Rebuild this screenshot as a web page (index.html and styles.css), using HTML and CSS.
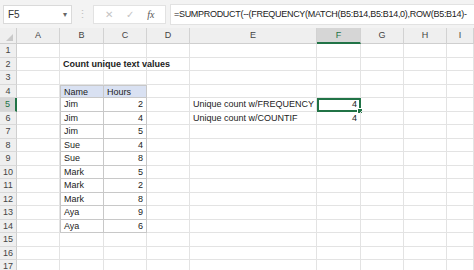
FILE: index.html
```html
<!DOCTYPE html>
<html>
  <head>
    <title>Count unique text values</title>
    <link rel="stylesheet" href="styles.css">
  </head>
  <body>
    <div class="bar">
      <div class="namebox">F5<span class="drop">&#9662;</span></div>
      <div class="dots">&#8942;</div>
      <div class="fxbox">
        <span class="ico">&#10005;</span>
        <span class="ico">&#10003;</span>
        <span class="fx">fx</span>
      </div>
      <div class="formula">=SUMPRODUCT(--(FREQUENCY(MATCH(B5:B14,B5:B14,0),ROW(B5:B14)-</div>
    </div>

    <div class="sheet">
      <div class="corner"><span class="tri"></span></div>
      <div class="ch">A</div><div class="ch">B</div><div class="ch">C</div><div class="ch">D</div>
      <div class="ch">E</div><div class="ch sel">F</div><div class="ch">G</div><div class="ch">H</div><div class="ch">I</div>

      <div class="rh">1</div><div></div><div></div><div></div><div></div><div></div><div></div><div></div><div></div><div></div>
      <div class="rh">2</div><div></div><div class="title">Count unique text values</div><div></div><div></div><div></div><div></div><div></div><div></div><div></div>
      <div class="rh">3</div><div></div><div></div><div></div><div></div><div></div><div></div><div></div><div></div><div></div>
      <div class="rh">4</div><div></div><div class="t th">Name</div><div class="t th">Hours</div><div></div><div></div><div></div><div></div><div></div><div></div>
      <div class="rh sel">5</div><div></div><div class="t">Jim</div><div class="t num">2</div><div></div><div class="lbl">Unique count w/FREQUENCY</div><div class="num active">4<span class="handle"></span></div><div></div><div></div><div></div>
      <div class="rh">6</div><div></div><div class="t">Jim</div><div class="t num">4</div><div></div><div class="lbl">Unique count w/COUNTIF</div><div class="num">4</div><div></div><div></div><div></div>
      <div class="rh">7</div><div></div><div class="t">Jim</div><div class="t num">5</div><div></div><div></div><div></div><div></div><div></div><div></div>
      <div class="rh">8</div><div></div><div class="t">Sue</div><div class="t num">4</div><div></div><div></div><div></div><div></div><div></div><div></div>
      <div class="rh">9</div><div></div><div class="t">Sue</div><div class="t num">8</div><div></div><div></div><div></div><div></div><div></div><div></div>
      <div class="rh">10</div><div></div><div class="t">Mark</div><div class="t num">5</div><div></div><div></div><div></div><div></div><div></div><div></div>
      <div class="rh">11</div><div></div><div class="t">Mark</div><div class="t num">2</div><div></div><div></div><div></div><div></div><div></div><div></div>
      <div class="rh">12</div><div></div><div class="t">Mark</div><div class="t num">8</div><div></div><div></div><div></div><div></div><div></div><div></div>
      <div class="rh">13</div><div></div><div class="t">Aya</div><div class="t num">9</div><div></div><div></div><div></div><div></div><div></div><div></div>
      <div class="rh">14</div><div></div><div class="t">Aya</div><div class="t num">6</div><div></div><div></div><div></div><div></div><div></div><div></div>
      <div class="rh">15</div><div></div><div></div><div></div><div></div><div></div><div></div><div></div><div></div><div></div>
      <div class="rh">16</div><div></div><div></div><div></div><div></div><div></div><div></div><div></div><div></div><div></div>
      <div class="rh">17</div><div></div><div></div><div></div><div></div><div></div><div></div><div></div><div></div><div></div>
    </div>
  </body>
</html>
```

FILE: styles.css
```css
body{
  margin: 0;
  width: 474px;
  height: 270px;
  overflow: hidden;
  background: white;
  font-family: "Liberation Sans", Arial, sans-serif;
  font-size: 9px;
  color: #222;
}

.bar{
  display: flex;
  align-items: center;
  height: 28px;
  padding: 0 0 0 3px;
  background: #f3f3f3;
  box-sizing: border-box;
}
.namebox{
  width: 69px;
  height: 19px;
  box-sizing: border-box;
  background: white;
  border: 1px solid #dadada;
  display: flex;
  align-items: center;
  justify-content: space-between;
  padding: 0 4px 0 4px;
  font-size: 10px;
  color: #333;
}
.drop{
  font-size: 8px;
  color: #666;
}
.dots{
  width: 21px;
  text-align: center;
  color: #c0c0c0;
  font-size: 11px;
}
.fxbox{
  width: 73px;
  height: 19px;
  box-sizing: border-box;
  background: white;
  border: 1px solid #e2e2e2;
  display: flex;
  align-items: center;
  justify-content: space-around;
  padding: 0 4px;
}
.ico{
  color: #c4c4c4;
  font-size: 10px;
}
.fx{
  font-family: "Liberation Serif", serif;
  font-style: italic;
  font-size: 10px;
  color: #555;
}
.formula{
  flex: 1;
  margin-left: 4px;
  height: 19px;
  line-height: 19px;
  background: white;
  border: 1px solid #e2e2e2;
  border-right: none;
  padding-left: 3px;
  white-space: nowrap;
  overflow: hidden;
  font-size: 9px;
  letter-spacing: -0.3px;
  color: #222;
}

.sheet{
  display: grid;
  grid-template-columns: 17px 43px 44px 43px 43px 127px 44px 43px 43px 1fr;
  grid-template-rows: 16px repeat(17, 13.5px);
}
.sheet > div{
  border-right: 1px solid #e3e3e3;
  border-bottom: 1px solid #e3e3e3;
  box-sizing: border-box;
  line-height: 12.5px;
  white-space: nowrap;
  position: relative;
}
.corner{
  background: #efefef;
  border-right: 1px solid #cfcfcf !important;
  border-bottom: 1px solid #cfcfcf !important;
}
.tri{
  position: absolute;
  right: 3px;
  bottom: 2px;
  border-left: 7px solid transparent;
  border-bottom: 7px solid #c9c9c9;
}
.sheet > .ch{
  background: #efefef;
  color: #444;
  text-align: center;
  line-height: 15px;
  border-right: 1px solid #d2d2d2;
  border-bottom: 1px solid #cfcfcf;
}
.sheet > .ch.sel{
  background: #d6d6d6;
  border-bottom: 2px solid #217346;
  color: #217346;
}
.sheet > .rh{
  background: #efefef;
  color: #444;
  text-align: center;
  border-right: 1px solid #cfcfcf;
  border-bottom: 1px solid #d9d9d9;
}
.sheet > .rh.sel{
  background: #d6d6d6;
  border-right: 2px solid #217346;
  color: #217346;
}

.title{
  font-weight: bold;
  padding-left: 3px;
  overflow: visible;
  z-index: 1;
}
.lbl{
  padding-left: 3px;
}
.num{
  text-align: right;
  padding-right: 3px;
}
.sheet > .t{
  border-right: 1px solid #c8c8c8;
  border-bottom: 1px solid #c8c8c8;
  padding-left: 3px;
}
.sheet > .t.num{
  padding-left: 0;
}
.sheet > .th{
  background: #d9e1f2;
  border-top: 1px solid #c8c8c8;
}
.sheet > .t:nth-child(10n+3){
  border-left: 1px solid #c8c8c8;
}
.sheet > .active{
  outline: 2px solid #217346;
  outline-offset: -2px;
}
.handle{
  position: absolute;
  right: -3px;
  bottom: -3px;
  width: 4px;
  height: 4px;
  background: #217346;
  border: 1px solid white;
}
```
